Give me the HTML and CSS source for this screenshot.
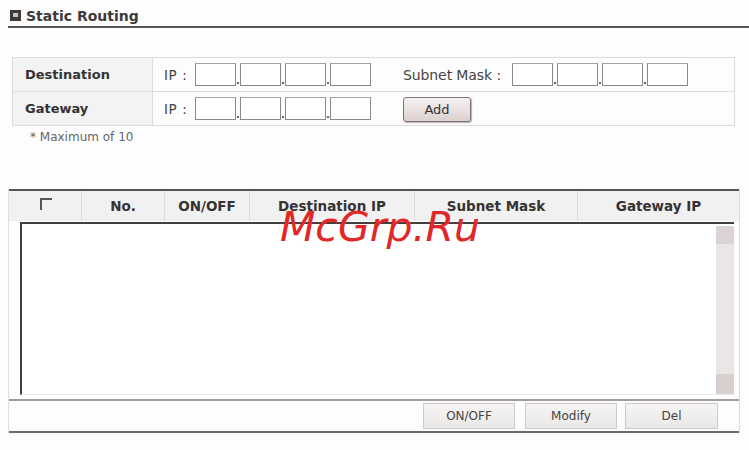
FILE: index.html
```html
<!DOCTYPE html>
<html>
<head>
<meta charset="utf-8">
<link rel="stylesheet" href="styles.css">
</head>
<body>
<div class="page">
  <div class="title">
    <svg class="title-icon" width="11" height="11" viewBox="0 0 11 11"><rect x="0" y="0" width="11" height="11" fill="#3e3a3a"/><rect x="3" y="3" width="5" height="4" fill="#c9c4c4"/></svg>
    <span>Static Routing</span>
  </div>

  <div class="form-box">
    <div class="frow">
      <div class="flabel">Destination</div>
      <div class="fip">
        <span class="iplabel">IP :</span>
        <span class="ipgroup"><span class="ipbox"></span><span class="dot"></span><span class="ipbox"></span><span class="dot"></span><span class="ipbox"></span><span class="dot"></span><span class="ipbox"></span></span>
      </div>
      <div class="frest">
        <span class="iplabel mask">Subnet Mask :</span>
        <span class="ipgroup"><span class="ipbox"></span><span class="dot"></span><span class="ipbox"></span><span class="dot"></span><span class="ipbox"></span><span class="dot"></span><span class="ipbox"></span></span>
      </div>
    </div>
    <div class="frow second">
      <div class="flabel">Gateway</div>
      <div class="fip">
        <span class="iplabel">IP :</span>
        <span class="ipgroup"><span class="ipbox"></span><span class="dot"></span><span class="ipbox"></span><span class="dot"></span><span class="ipbox"></span><span class="dot"></span><span class="ipbox"></span></span>
      </div>
      <div class="frest">
        <button class="add-btn">Add</button>
      </div>
    </div>
  </div>

  <div class="note">* Maximum of 10</div>

  <div class="list">
    <div class="lhead">
      <div class="hc c1"><span class="chk"></span></div>
      <div class="hc c2">No.</div>
      <div class="hc c3">ON/OFF</div>
      <div class="hc c4">Destination IP</div>
      <div class="hc c5">Subnet Mask</div>
      <div class="hc c6">Gateway IP</div>
    </div>
    <div class="lbody">
      <div class="inner">
        <div class="content"></div>
        <div class="scroll"><div class="sb-top"></div><div class="sb-track"></div><div class="sb-bot"></div></div>
      </div>
    </div>
    <div class="lfoot">
      <button class="fbtn b1">ON/OFF</button>
      <button class="fbtn b2">Modify</button>
      <button class="fbtn b3">Del</button>
    </div>
  </div>

  <div class="watermark">McGrp.Ru</div>
</div>
</body>
</html>
```

FILE: styles.css
```css
html, body {
  margin: 0;
  padding: 0;
  background: #fdfdfd;
}
.page {
  position: relative;
  width: 749px;
  height: 450px;
  font-family: "DejaVu Sans", Verdana, sans-serif;
  color: #3a3a3a;
  overflow: hidden;
}
.title {
  margin-left: 8px;
  height: 21px;
  padding-top: 5px;
  border-bottom: 2px solid #5a5656;
  display: flex;
  align-items: center;
  font-size: 14px;
  font-weight: bold;
  color: #3d3a3a;
}
.title-icon {
  margin-left: 2px;
  margin-right: 5px;
}
.form-box {
  margin-top: 29px;
  margin-left: 12px;
  width: 723px;
  box-sizing: border-box;
  border: 1px solid #dcdcdc;
}
.frow {
  display: flex;
  height: 33px;
}
.frow.second {
  border-top: 1px solid #dcdcdc;
}
.flabel {
  width: 140px;
  box-sizing: border-box;
  padding-left: 12px;
  background: #f3f3f3;
  border-right: 1px solid #dcdcdc;
  display: flex;
  align-items: center;
  font-size: 13px;
  font-weight: bold;
  color: #333;
}
.fip {
  width: 250px;
  box-sizing: border-box;
  padding-left: 11px;
  display: flex;
  align-items: center;
}
.frest {
  flex: 1;
  display: flex;
  align-items: center;
}
.iplabel {
  font-size: 13.5px;
  letter-spacing: 0.6px;
  color: #444;
  width: 31px;
}
.iplabel.mask {
  width: 109px;
  font-size: 14px;
  letter-spacing: -0.1px;
}
.ipgroup {
  display: flex;
  align-items: flex-end;
}
.ipbox {
  width: 41px;
  height: 23px;
  box-sizing: border-box;
  border: 1px solid #8d8787;
  border-top-color: #a8a2a2;
  background: #fff;
}
.dot {
  width: 2px;
  height: 2px;
  margin: 0 1px 2px 1px;
  background: #6a6464;
}
.add-btn {
  width: 68px;
  height: 25px;
  margin-top: 1px;
  border: 1px solid #7a7373;
  border-radius: 3px;
  background: linear-gradient(#f7f1f1, #dcd0d0);
  box-shadow: 1px 1px 1px #b8b0b0;
  font-family: "DejaVu Sans", Verdana, sans-serif;
  font-size: 13px;
  color: #333;
  padding: 0;
}
.note {
  margin-top: 4px;
  margin-left: 30px;
  height: 14px;
  line-height: 14px;
  font-size: 12px;
  color: #666;
}
.list {
  margin-top: 45px;
  margin-left: 8px;
  width: 732px;
  box-sizing: border-box;
  border-left: 1px solid #dedede;
  border-right: 1px solid #dedede;
}
.lhead {
  display: flex;
  height: 30px;
  border-top: 2px solid #575353;
  background: #f1f1f1;
}
.hc {
  display: flex;
  align-items: center;
  justify-content: center;
  border-right: 1px solid #dcdcdc;
  box-sizing: border-box;
  font-size: 13.5px;
  font-weight: bold;
  color: #363333;
}
.c1 { width: 73px; }
.c2 { width: 83px; }
.c3 { width: 85px; }
.c4 { width: 165px; }
.c5 { width: 163px; }
.c6 { flex: 1; border-right: none; }
.chk {
  width: 10px;
  height: 10px;
  margin-left: 2px;
  margin-bottom: 4px;
  border-top: 2px solid #555;
  border-left: 2px solid #555;
}
.lbody {
  padding: 1px 5px 4px 11px;
}
.inner {
  height: 173px;
  box-sizing: border-box;
  border-top: 2px solid #444040;
  border-left: 2px solid #444040;
  border-bottom: 1px solid #efeaea;
  background: #fff;
  display: flex;
}
.content {
  flex: 1;
}
.scroll {
  width: 18px;
  margin-top: 2px;
  display: flex;
  flex-direction: column;
}
.sb-top {
  height: 18px;
  background: #dcd4d4;
}
.sb-track {
  flex: 1;
  background: #ebe6e6;
}
.sb-bot {
  height: 20px;
  background: #d8cfcf;
}
.lfoot {
  height: 30px;
  border-top: 2px solid #a39d9d;
  border-bottom: 2px solid #6f6a6a;
  display: flex;
  align-items: center;
  justify-content: flex-end;
  padding-right: 21px;
}
.fbtn {
  height: 26px;
  width: 92px;
  box-sizing: border-box;
  border: 1px solid #cfcaca;
  background: linear-gradient(#f6f4f4, #ebe8e8);
  font-family: "DejaVu Sans", Verdana, sans-serif;
  font-size: 12px;
  color: #444;
  padding: 0;
}
.b2 { margin-left: 10px; }
.b3 { margin-left: 8px; width: 93px; }
.watermark {
  position: absolute;
  left: 280px;
  top: 207px;
  font-family: "DejaVu Sans", sans-serif;
  font-style: oblique;
  font-size: 41px;
  line-height: 41px;
  color: #e12828;
}
```
